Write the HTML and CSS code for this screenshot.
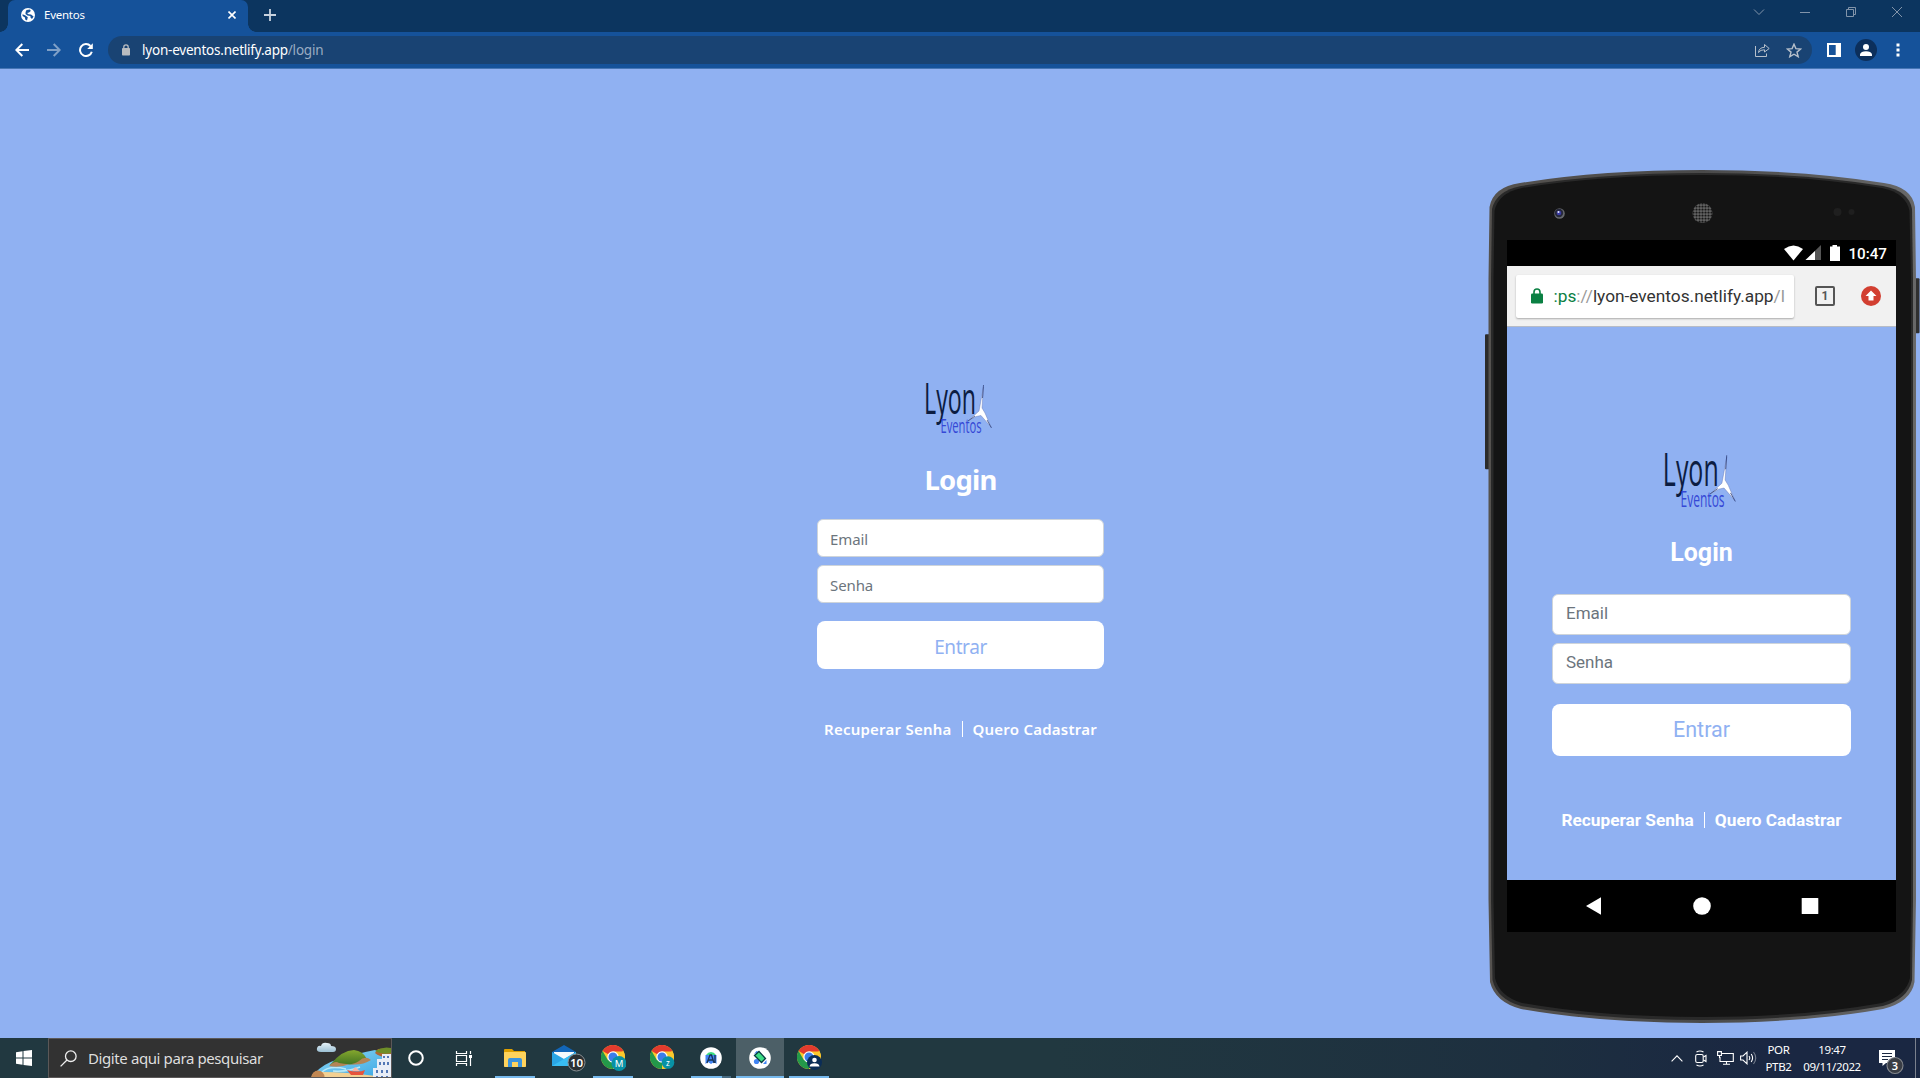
FILE: index.html
```html
<!DOCTYPE html>
<html lang="pt-BR">
<head>
<meta charset="utf-8">
<title>Eventos</title>
<link rel="stylesheet" href="styles.css">
</head>
<body>
<svg class="defs" aria-hidden="true">
  <symbol id="turbine" viewBox="0 0 68 54">
    <path d="M57.500 6L56 27L59 32L65 46L55 34.500L50 35.500L42 40L53 30Z" fill="#fff" stroke="#5a6cae" stroke-width=".4"/>
    <path d="M57.500 4L56.500 17M65.500 47L61 39M42 40L49 35" stroke="#334681" stroke-width=".8" fill="none"/>
  </symbol>
  <symbol id="chrome" viewBox="0 0 24 24">
    <circle cx="12" cy="12" r="12" fill="#fcc82c"/>
    <path d="M12 12L1.600 6A12 12 0 0 1 22.400 6Z" fill="#e33b2e"/>
    <path d="M12 12L12 24A12 12 0 0 1 1.600 6L6.800 15Z" fill="#24994a"/>
    <path d="M12 6.500H22.600A12 12 0 0 1 12 24L17 15Z" fill="#fcc82c"/>
    <circle cx="12" cy="12" r="5.700" fill="#fff"/><circle cx="12" cy="12" r="4.500" fill="#3b7de9"/>
  </symbol>
</svg>

<header class="browser">
  <div class="tabs">
    <div class="tab">
      <svg width="14" height="14" viewBox="0 0 14 14"><circle cx="7" cy="7" r="7" fill="#fff"/><path d="M1.500 6.200L4.500 7.500L6.800 9.200L6 12.600L4.200 11.500L4 9.500L1.600 8ZM5.500 2L9 1.500L9.800 3L8 4.500L6 5L7.500 6.200L10 6.500L12.600 8.500L11 11L9.500 9.500L9.400 8L6.500 7.500L4.500 6L4.600 4Z" fill="#15529a"/></svg>
      <span class="tab-title">Eventos</span>
      <svg class="tab-close" width="8" height="8" viewBox="0 0 8 8"><path d="M.5 .5L7.500 7.500M7.500 .5L.5 7.500" stroke="#fff" stroke-width="1.600"/></svg>
    </div>
    <svg class="new-tab" width="12" height="12" viewBox="0 0 12 12"><path d="M6 0V12M0 6H12" stroke="#c8d2de" stroke-width="1.800"/></svg>
    <div class="window-buttons">
      <svg viewBox="0 0 12 12"><path d="M1 3.500L6 8.500L11 3.500"/></svg>
      <svg viewBox="0 0 12 12"><path d="M1 6.500H11"/></svg>
      <svg viewBox="0 0 12 12"><path d="M1.500 3.500H8.500V10.500H1.500ZM3.500 3.500V1.500H10.500V8.500H8.500"/></svg>
      <svg viewBox="0 0 12 12"><path d="M1 1L11 11M11 1L1 11"/></svg>
    </div>
  </div>
  <div class="toolbar">
    <svg class="nav" viewBox="0 0 14 14"><path d="M14 7H1.500M7.300 1L1.300 7L7.300 13"/></svg>
    <svg class="nav dim" viewBox="0 0 14 14"><path d="M0 7H12.500M6.700 1L12.700 7L6.700 13"/></svg>
    <svg class="nav" viewBox="0 0 14 14"><path d="M11.500 3A6 6 0 1 0 12.800 8.700"/><path d="M13.800 .3V6H8.200Z" fill="#fff" stroke="none"/></svg>
    <div class="address">
      <svg class="lock" width="8" height="12" viewBox="0 0 8 12"><rect y="4" width="8" height="7.500" rx=".8" fill="#b9bcc0"/><path d="M1.800 4.500V3A2.200 2.200 0 0 1 6.200 3V4.500" fill="none" stroke="#b9bcc0" stroke-width="1.300"/></svg>
      <span class="url">lyon-eventos.netlify.app<i>/login</i></span>
      <svg class="share" width="15" height="14" viewBox="0 0 15 14"><path d="M.5 3V13.500H11.500V10.500M3.500 9.500Q4 4.500 9.500 4.300V1.500L14.200 5.500L9.500 9V6.800Q5.500 6.500 3.500 9.500Z"/></svg>
      <svg width="16" height="15" viewBox="0 0 16 15"><path d="M8 1.200L9.900 5.600L14.700 6L11 9.100L12.200 13.700L8 11.200L3.800 13.700L5 9.100L1.300 6L6.100 5.600Z" stroke-width="1.400"/></svg>
    </div>
    <svg class="panel" width="14" height="14" viewBox="0 0 14 14"><path d="M0 0H14V14H0ZM2 2V12H8.700V2Z" fill="#fff" fill-rule="evenodd"/></svg>
    <svg class="avatar" width="22" height="22" viewBox="0 0 22 22"><circle cx="11" cy="11" r="11" fill="#0c2f5b"/><circle cx="11" cy="8" r="3" fill="#fff"/><path d="M5 17V15.200Q6 12.300 11 12.200Q16 12.300 17 15.200V17Z" fill="#fff"/></svg>
    <svg class="dots" width="4" height="14" viewBox="0 0 4 14"><path d="M.5 .5H3.500V3.500H.5ZM.5 5.500H3.500V8.500H.5ZM.5 10.500H3.500V13.500H.5Z" fill="#fff"/></svg>
  </div>
</header>

<main class="page">
  <form class="login">
    <svg class="logo" viewBox="0 0 68 54">
      <text x="-2" y="32.500" font-size="43" textLength="52" lengthAdjust="spacingAndGlyphs" fill="#0c1d42">Lyon</text>
      <text x="14.500" y="52" font-size="20.500" textLength="41" lengthAdjust="spacingAndGlyphs" fill="#3548d6">Eventos</text>
      <use href="#turbine" width="68" height="54"/>
    </svg>
    <h1>Login</h1>
    <div class="field">Email</div>
    <div class="field">Senha</div>
    <div class="submit">Entrar</div>
    <nav class="links"><a>Recuperar Senha</a><span class="sep"></span><a>Quero Cadastrar</a></nav>
  </form>
</main>

<aside class="phone">
  <svg class="shell" viewBox="0 0 436 855" width="436" height="856" preserveAspectRatio="none">
    <defs><linearGradient id="edge"><stop offset="0" stop-color="#55524f"/><stop offset=".5" stop-color="#4a4a4a"/><stop offset="1" stop-color="#686868"/></linearGradient></defs>
    <rect x="0" y="165" width="8" height="135" rx="1" fill="#2b2b2b"/><rect x="428" y="109" width="6.500" height="55" rx="1" fill="#303030"/>
    <path d="M3.500 110L4.500 38Q8 18 35 14Q115 1 217 1Q319 1 399 14Q427 18 430 38L431 110V730L429.500 812Q426 832 398 839Q319 853 217 853Q115 853 36 839Q10 832 5 812L3.500 730Z" fill="url(#edge)"/>
    <path d="M6 110L7 40Q11 22 36 17Q115 4 217 4Q319 4 398 17Q424 22 427 40L428 110V730L427 810Q423 829 398 836Q319 850 217 850Q115 850 36 836Q12 829 7.500 810L6 730Z" fill="#292929"/>
    <path d="M8.500 110L9.500 42Q13 24 37 19Q115 6 217 6Q319 6 397 19Q421 24 424.500 42L426 110V730L425 808Q421 826 397 833Q319 847 217 847Q115 847 37 833Q14 826 10 808L8.500 730Z" fill="#141414"/>
    <circle cx="74.500" cy="44.500" r="5.300" fill="#66696c"/><circle cx="74" cy="44" r="4.200" fill="#26283a"/><circle cx="74" cy="44" r="2.300" fill="#3b3da6"/><circle cx="73.500" cy="43" r="1" fill="#e8e8ff"/>
    <pattern id="mesh" width="3" height="3" patternUnits="userSpaceOnUse"><rect width="3" height="3" fill="#666"/><circle cx="1.500" cy="1.500" r="1.200" fill="#181818"/></pattern>
    <circle cx="217.500" cy="44" r="10" fill="url(#mesh)"/>
    <circle cx="352.500" cy="43" r="4" fill="#1f1f1f"/><circle cx="366.500" cy="43" r="3" fill="#1f1f1f"/>
  </svg>
  <div class="screen">
    <div class="status">
      <svg width="57" height="17" viewBox="0 0 57 17"><path d="M0 4Q9.500 -3 19 4L9.500 15.500Z" fill="#fff"/><path d="M37 0V15H21.500Z" fill="#555"/><path d="M31 6V15H21.500Z" fill="#fff"/><path d="M46 1.500H48.500V0H53V1.500H56V16H46Z" fill="#fff"/></svg>
      <span>10:47</span>
    </div>
    <div class="mobile-bar">
      <div class="mobile-url">
        <svg width="12" height="16" viewBox="0 0 12 16"><rect y="5.500" width="12" height="10" rx="1.300" fill="#0b8043"/><path d="M3 6V4A3 3 0 0 1 9 4V6" fill="none" stroke="#0b8043" stroke-width="1.600"/></svg>
        <span class="address-text"><b>:ps</b><i>://</i>lyon-eventos.netlify.app<i>/l</i></span>
      </div>
      <span class="tab-count">1</span>
      <svg class="update" width="20" height="20" viewBox="0 0 20 20"><circle cx="10" cy="10" r="10" fill="#d23f31"/><path d="M10 4.500L15.500 10H12.500V14.500H7.500V10H4.500Z" fill="#fff"/></svg>
    </div>
    <div class="mobile-page">
      <svg class="logo" viewBox="0 0 68 54">
        <text x="-2" y="32.500" font-size="43" textLength="52" lengthAdjust="spacingAndGlyphs" fill="#0c1d42">Lyon</text>
        <text x="14.500" y="52" font-size="20.500" textLength="41" lengthAdjust="spacingAndGlyphs" fill="#3548d6">Eventos</text>
        <use href="#turbine" width="68" height="54"/>
      </svg>
      <h2>Login</h2>
      <div class="field">Email</div>
      <div class="field">Senha</div>
      <div class="submit">Entrar</div>
      <nav class="links"><a>Recuperar Senha</a><span class="sep"></span><a>Quero Cadastrar</a></nav>
    </div>
    <div class="android-nav">
      <svg viewBox="0 0 18 18"><path d="M16 .3V17.700L1 9Z"/></svg>
      <svg viewBox="0 0 18 18"><circle cx="9" cy="9" r="8.800"/></svg>
      <svg viewBox="0 0 18 18"><rect x=".7" y="1" width="16.600" height="16" rx=".6"/></svg>
    </div>
  </div>
</aside>

<footer class="taskbar">
  <div class="start"><svg width="16" height="16" viewBox="0 0 16 16"><path d="M0 2.200L6.500 1.300V7.500H0ZM7.500 1.100L16 0V7.500H7.500ZM0 8.500H6.500V14.700L0 13.800ZM7.500 8.500H16V16L7.500 14.900Z" fill="#fff"/></svg></div>
  <div class="search">
    <svg width="17" height="17" viewBox="0 0 17 17"><circle cx="10.800" cy="6.200" r="5.300" fill="none" stroke="#eee" stroke-width="1.300"/><path d="M7 10L.6 16.400" stroke="#eee" stroke-width="1.300"/></svg>
    <span>Digite aqui para pesquisar</span>
    <svg class="beach" width="80" height="39" viewBox="0 0 80 39">
      <defs><linearGradient id="hill" x2="0" y2="1"><stop stop-color="#85a72e"/><stop offset="1" stop-color="#3d7021"/></linearGradient><linearGradient id="sea" x2="1" y2="1"><stop stop-color="#8fd8f5"/><stop offset="1" stop-color="#36a4e3"/></linearGradient><linearGradient id="cloud" x2="0" y2="1"><stop stop-color="#e6f2f8"/><stop offset="1" stop-color="#9cc0d4"/></linearGradient></defs>
      <path d="M10 13Q5 13 6 9Q7 6 10 7Q11 3 16 4Q20 4 20 7Q25 7 25 10Q25 13 22 13Z" fill="url(#cloud)"/>
      <path d="M4 34Q12 25 25 21Q48 14 64 11L80 17V39H7Z" fill="url(#sea)"/>
      <path d="M11 33Q18 26 35 30M22 32Q37 33 49 28" stroke="#b9e9f8" stroke-width="1.500" fill="none"/>
      <path d="M0 39Q3 30 11 33Q34 33 65 37V39Z" fill="#f3d092"/><circle cx="7" cy="38" r="6.500" fill="#c18752"/>
      <path d="M64 14L67 10L80 9V18Q69 19 64 14Z" fill="#b06733"/><path d="M64 12Q72 7 80 9V14Q71 16 64 12Z" fill="#6e8e28"/>
      <path d="M19 26Q31 11 43 11Q52 12 56 20Q48 27 32 25L22 27Z" fill="url(#hill)"/><path d="M18 27Q24 21 28 24Q42 27 48 22Q54 16 60 21Q50 27 39 25Q29 29 18 27Z" fill="#b48456"/>
      <path d="M36 31Q47 34 54 31L52 36L40 36Z" fill="#e6533d"/><path d="M41 32L44 28L49 32Z" fill="#f8b5a5"/>
      <path d="M66 20H71V15H80V39H62V29H66Z" fill="#e8edf6"/><path d="M69 23V26M73 23V26M77 23V26M73 17V19M77 17V19M66 31V34M71 31V34M76 31V34M66 37V39M71 37V39M76 37V39" stroke="#5277b5" stroke-width="2"/>
    </svg>
  </div>
  <div class="app"><svg width="16" height="16" viewBox="0 0 16 16"><circle cx="8" cy="8" r="6.800" fill="none" stroke="#fff" stroke-width="2"/></svg></div>
  <div class="app view"><svg width="17" height="17" viewBox="0 0 17 17"><path d="M1.500 1V3.500H11.500V1M1.500 5.500H11.500V11.500H1.500ZM1.500 16V13.500H11.500V16M15.500 1V4M15.500 8V16" fill="none" stroke="#fff" stroke-width="1.200"/><rect x="14" y="5" width="3" height="3" fill="#fff"/></svg></div>
  <div class="apps">
    <div class="app run"><svg width="22" height="20" viewBox="0 0 22 20"><path d="M0 2Q0 1 1 1H8L10 3H21V9H0Z" fill="#dfa000"/><rect y="4" width="22" height="15" rx=".7" fill="#ffd35c"/><path d="M4 19V12Q4 10 6 10H16Q18 10 18 12V19H14V14H8V19Z" fill="#3d94dc"/></svg></div>
    <div class="app mail"><svg width="36" height="28" viewBox="0 0 36 28"><path d="M1 8L13 1L25 8V22H1Z" fill="#1266b9"/><path d="M3 8H23V16H3Z" fill="#f5f9fc"/><path d="M1 8L13 15L25 8V22H1Z" fill="#2aa5e5"/><path d="M1 22L13 15L25 8V22Z" fill="#38bdf3"/><circle cx="25.500" cy="18.500" r="8.500" fill="#2b3033" stroke="#888f93"/><text x="25.500" y="22.700" text-anchor="middle" font-size="11.500" font-weight="600" fill="#fff">10</text></svg></div>
    <div class="app run"><svg width="25" height="26" viewBox="0 0 25 26"><use href="#chrome" width="24" height="24"/><circle cx="18" cy="18.500" r="7.500" fill="#0891a5"/><text x="18" y="22" text-anchor="middle" font-size="9.500" fill="#fff">M</text></svg></div>
    <div class="app"><svg width="25" height="26" viewBox="0 0 25 26"><use href="#chrome" width="24" height="24"/><circle cx="18" cy="17.500" r="6.300" fill="#0891a5"/><text x="18" y="20.500" text-anchor="middle" font-size="8" fill="#fff">z</text></svg></div>
    <div class="app studio"><svg width="22" height="22" viewBox="0 0 22 22"><circle cx="11" cy="11" r="10.800" fill="#fff"/><path d="M5.500 8H16.500V17L14 15L11 17L8 15L5.500 17Z" fill="#4285f4"/><path d="M6 8Q8 5 11 5Q14 5 16 8Z" fill="#3ddc84"/><path d="M7 16L10 8H11.500L14 16M8.500 13H12.500M15 8V16" fill="none" stroke="#173353" stroke-width="1.300"/></svg></div>
    <div class="app active"><svg width="22" height="22" viewBox="0 0 22 22"><circle cx="11" cy="11" r="10.800" fill="#fff"/><circle cx="7.500" cy="14.500" r="2.600" fill="#4285f4"/><path d="M5 7L7.500 4L10 5M14 17L17.500 17L17.500 13" fill="#4285f4"/><path d="M5.500 8.500L10 4.500L16.500 11.500L12.500 15.500Z" fill="#3ddc84" stroke="#073d42" stroke-width="1.300"/></svg></div>
    <div class="app run"><svg width="25" height="26" viewBox="0 0 25 26"><use href="#chrome" width="24" height="24"/><circle cx="17.500" cy="17.500" r="7.500" fill="#0b2d57"/><circle cx="17.500" cy="15" r="2.300" fill="#fff"/><path d="M12.500 21.500Q13 18.300 17.500 18.300Q22 18.300 22.500 21.500Z" fill="#fff"/></svg></div>
  </div>
  <div class="tray">
    <svg width="12" height="7" viewBox="0 0 12 7"><path d="M.6 6.300L6 .9L11.400 6.300"/></svg>
    <svg width="12" height="17" viewBox="0 0 12 17"><rect x=".7" y="4.500" width="7.500" height="8" rx="1.500"/><path d="M8.500 7L11 5.500V11.500L8.500 10M1.500 2Q5 0 8.500 2M1.500 15Q5 17 8.500 15"/></svg>
    <svg width="17" height="14" viewBox="0 0 17 14"><path d="M5 2.500H16.300V10.500H3V6M9.500 10.500V13M6 13.300H13M.6 .6H4.400V4.500H.6ZM2.500 4.500V7"/></svg>
    <svg width="17" height="14" viewBox="0 0 17 14"><path d="M.6 5H3L7 1.200V12.800L3 9H.6ZM9 5Q10.500 7 9 9M11.200 3Q14 7 11.200 11"/><path d="M13.500 1Q18 7 13.500 13" opacity=".4"/></svg>
    <div class="stack lang"><span>POR</span><span>PTB2</span></div>
    <div class="stack clock"><span>19:47</span><span>09/11/2022</span></div>
    <svg class="notes" width="26" height="25" viewBox="0 0 26 25"><path d="M0 0H16V13H7L3.500 16V13H0Z" fill="#fff" stroke="none"/><path d="M3 3.500H13M3 6.500H13M3 9.500H9" stroke="#1b2840"/><circle cx="16" cy="15.500" r="8" fill="#393d45" stroke="#85888d"/><text x="16" y="19.500" text-anchor="middle" font-size="11" font-weight="600" fill="#fff" stroke="none">3</text></svg>
    <div class="peek"></div>
  </div>
</footer>
</body>
</html>
```
FILE: styles.css
```css
* { box-sizing: border-box; }
body { margin: 0; width: 1920px; height: 1078px; overflow: hidden; display: flex; flex-direction: column; position: relative; background: #90b1f2; font-family: "Noto Sans", "Open Sans", sans-serif; }
svg { display: block; flex: none; }
i { font-style: normal; }
.defs { position: absolute; width: 0; height: 0; }

.browser { height: 69px; flex: none; background: #15529a; border-bottom: 1px solid #4676b5; }
.tabs { height: 32px; background: #0c355f; display: flex; padding-left: 8px; }
.tab { width: 240px; height: 32px; padding: 0 12px 2px 13px; display: flex; align-items: center; background: #15529a; border-radius: 7px 7px 0 0; position: relative; }
.tab::before, .tab::after { content: ""; position: absolute; bottom: 0; width: 8px; height: 8px; }
.tab::before { left: -8px; background: radial-gradient(circle at 0 0, #0c355f 7.500px, #15529a 8px); }
.tab::after { right: -8px; background: radial-gradient(circle at 100% 0, #0c355f 7.500px, #15529a 8px); }
.tab-title { margin-left: 9px; padding-bottom: 2px; font-size: 11.500px; color: #fff; letter-spacing: -.25px; }
.tab-close { margin-left: auto; }
.new-tab { margin: 9px 0 0 16px; }
.window-buttons { margin: 6px 17px 0 auto; display: flex; gap: 34px; }
.window-buttons svg { width: 12px; height: 12px; fill: none; stroke: #8294aa; stroke-width: 1; }
.toolbar { height: 36px; display: flex; align-items: center; padding: 0 20px 0 15px; }
.nav { width: 14px; height: 14px; margin-right: 18px; fill: none; stroke: #fff; stroke-width: 2; }
.nav.dim { opacity: .45; }
.nav:nth-child(3) { margin-right: 15px; }
.address { width: 1704px; height: 28px; border-radius: 14px; background: #194373; display: flex; align-items: center; padding: 0 10px 0 14px; }
.address > svg:not(.lock) { fill: none; stroke: #b7c0cb; }
.url { margin-left: 12px; font-size: 13.500px; letter-spacing: -.22px; color: #fff; }
.url i { color: #9aacc2; }
.share { margin: 0 16px 0 auto; }
.panel { margin-left: 15px; }
.avatar { margin-left: 14px; }
.dots { margin-left: auto; }

.page { height: 969px; flex: none; display: flex; justify-content: center; padding-top: 312px; }
.login { width: 287px; margin-left: 1px; display: flex; flex-direction: column; }
.logo { overflow: visible; }
.login .logo { width: 68px; height: 54px; margin-left: 109px; }
.logo text { font-family: "Open Sans", sans-serif; }
h1 { margin: 14px 0 0; height: 57px; line-height: 62px; text-align: center; color: #fff; font-size: 27.500px; font-weight: 700; letter-spacing: -.8px; }
.login h1 { margin-bottom: 13px; }
.field { background: #fff; border: 1px solid #ced4da; border-radius: 6px; color: #6c757d; }
.login .field { height: 38px; line-height: 38px; padding-left: 12px; font-size: 15px; letter-spacing: -.1px; margin-bottom: 8px; }
.submit { background: #fff; color: #90b1f2; text-align: center; border-radius: 8px; }
.login .submit { height: 48px; margin-top: 10px; line-height: 52px; font-size: 19px; letter-spacing: -.4px; }
.links { display: flex; align-items: center; justify-content: center; color: #fff; font-weight: 700; white-space: nowrap; }
.sep { width: 1px; height: 16px; background: #fff; }
.login .links { margin-top: 49px; height: 22px; gap: 10px; font-size: 15px; font-weight: 600; letter-spacing: .23px; }

.phone { position: absolute; left: 1485px; top: 169px; width: 435px; height: 856px; overflow: hidden; padding: 71px 24px 0 22px; font-family: Roboto, sans-serif; }
.shell { position: absolute; left: 0; top: 0; }
.screen { position: relative; width: 389px; height: 692px; background: #90b1f2; }
.status { height: 26px; background: #000; display: flex; align-items: center; justify-content: flex-end; gap: 7px; padding: 1px 9px 0 0; color: #fff; font-size: 15.200px; font-weight: 500; }
.mobile-bar { height: 61px; background: #f1f1f1; border-bottom: 1px solid #b7bcc6; display: flex; align-items: center; padding-left: 9px; }
.mobile-url { width: 278px; height: 43px; background: #fff; border-radius: 2px; box-shadow: 0 1px 2px #aaa; display: flex; align-items: center; padding-left: 15px; }
.address-text { margin-left: 10.500px; width: 232px; overflow: hidden; white-space: nowrap; font-size: 17.300px; color: #333; }
.address-text b { font-weight: 400; color: #0b8043; }
.address-text i { color: #999; }
.tab-count { width: 20px; height: 20px; margin-left: 21px; border: 2px solid #555; border-radius: 2px; text-align: center; font-size: 12px; line-height: 16px; font-weight: 700; color: #555; }
.update { margin-left: 26px; }
.mobile-page { height: 553px; padding: 124px 45px 0; display: flex; flex-direction: column; }
.mobile-page .logo { width: 73px; height: 58px; margin-left: 113px; }
h2 { margin: 20px 0 0; height: 49px; line-height: 48px; text-align: center; font-size: 25px; font-weight: 700; color: #fff; }
.mobile-page .field { height: 41px; line-height: 37px; padding-left: 13px; font-size: 17px; margin-bottom: 8px; }
.mobile-page h2 { margin-bottom: 16px; }
.mobile-page .submit { height: 52px; margin-top: 12px; line-height: 52px; font-size: 21.500px; }
.mobile-page .links { margin-top: 53px; height: 22px; font-size: 17.250px; gap: 10px; }
.android-nav { height: 52px; background: #000; display: flex; align-items: center; justify-content: center; gap: 90px; }
.android-nav svg { width: 18px; height: 18px; fill: #fff; }

.taskbar { height: 40px; flex: none; display: flex; background: linear-gradient(90deg, #213840, #213840 55%, #1d2f3f 80%, #1a2742 92%); }
.start { width: 48px; display: flex; align-items: center; justify-content: center; }
.search { width: 344px; border: 1px solid #5b5858; background: #323232; display: flex; align-items: center; padding-left: 11px; overflow: hidden; color: #dedede; }
.search span { margin-left: 11px; font-size: 15px; letter-spacing: -.4px; white-space: nowrap; }
.beach { margin-left: auto; }
.app { width: 48px; height: 40px; display: flex; align-items: center; justify-content: center; position: relative; }
.view { padding-right: 2px; }
.mail { padding-left: 9px; }
.apps { display: flex; gap: 1px; margin-left: 3px; }
.run::after, .studio::after, .active::after { content: ""; position: absolute; bottom: 0; left: 4px; width: 40px; height: 2px; background: #76b9ed; }
.studio::after { background: linear-gradient(90deg, #76b9ed 31px, #476b82 31px); }
.active { background: #4c5f67; }
.active::after { left: 0; width: 48px; }
.tray { margin-left: auto; display: flex; align-items: center; }
.tray > svg { fill: none; stroke: #fff; stroke-width: 1.100; margin-right: 12px; }
.tray > svg:nth-child(2) { margin-right: 10px; }
.tray > svg:nth-child(3) { margin-right: 6px; }
.tray > svg:nth-child(4) { margin-right: 8px; }
.stack { height: 40px; display: flex; flex-direction: column; align-items: center; font-size: 11.500px; line-height: 17px; padding-top: 3px; color: #fff; letter-spacing: -.35px; }
.lang { width: 27px; }
.clock { width: 60px; margin: 0 17px 0 10px; }
.tray .notes { margin: 8px 10px 0 0; }
.peek { width: 5px; height: 40px; border-left: 1px solid #7b818d; }
```
